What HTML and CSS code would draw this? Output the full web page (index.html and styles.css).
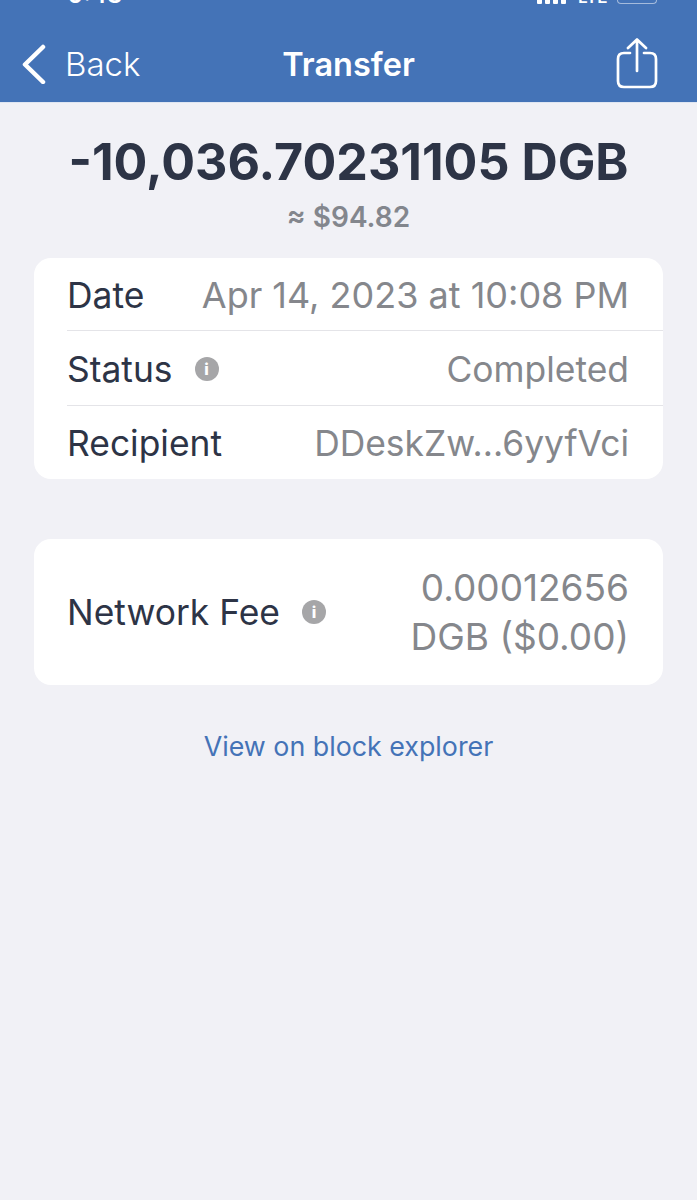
FILE: index.html
```html
<!DOCTYPE html>
<html>
<head>
    <meta charset="utf-8">
    <title>Transfer</title>
    <link rel="stylesheet" href="styles.css">
</head>
<body>
<div class="header">
    <div class="status-bar">
        <span class="time">9:43</span>
        <div class="status-icons">
            <svg class="signal" width="30" height="4" viewBox="0 0 30 4"><rect x="0" y="-2" width="5" height="6" rx="1"/><rect x="8" y="-2" width="5" height="6" rx="1"/><rect x="16" y="-2" width="5" height="6" rx="1"/><rect x="24" y="-2" width="5" height="6" rx="1"/></svg>
            <span class="network">LTE</span>
            <div class="battery"></div>
        </div>
    </div>
    <div class="nav">
        <div class="back">
            <svg width="26" height="40" viewBox="0 0 26 40"><path d="M23 3 L5 20.5 L23 38" fill="none" stroke="#fff" stroke-width="4.5" stroke-linecap="round" stroke-linejoin="round"/></svg>
            <span>Back</span>
        </div>
        <div class="title">Transfer</div>
        <svg class="share" width="42" height="52" viewBox="0 0 42 52"><path d="M14 15 H8 Q2 15 2 21 V43 Q2 49 8 49 H34 Q40 49 40 43 V21 Q40 15 34 15 H28" fill="none" stroke="#fff" stroke-width="2.7" stroke-linecap="round"/><path d="M21 33 V2 M12 10 L21 1.5 L30 10" fill="none" stroke="#fff" stroke-width="2.7" stroke-linecap="round" stroke-linejoin="round"/></svg>
    </div>
</div>

<div class="amount">
    <div class="amount-main">-10,036.70231105 DGB</div>
    <div class="amount-usd">≈ $94.82</div>
</div>

<div class="card">
    <div class="row">
        <div class="label">Date</div>
        <div class="value date-value">Apr 14, 2023 at 10:08 PM</div>
    </div>
    <div class="row">
        <div class="label">Status <span class="info">i</span></div>
        <div class="value">Completed</div>
    </div>
    <div class="row">
        <div class="label">Recipient</div>
        <div class="value">DDeskZw...6yyfVci</div>
    </div>
</div>

<div class="card fee-card">
    <div class="label">Network Fee <span class="info">i</span></div>
    <div class="value fee-value">0.00012656<br>DGB ($0.00)</div>
</div>

<div class="explorer">View on block explorer</div>
</body>
</html>
```

FILE: styles.css
```css
body {
    margin: 0;
    height: 1200px;
    overflow: hidden;
    background-color: #f1f1f6;
    font-family: Inter, "Liberation Sans", sans-serif;
    color: #2d3446;
}

.header {
    height: 102px;
    background-color: #4473b7;
    border-bottom: 1px solid #dfe6f2;
    color: #fff;
}

.status-bar {
    height: 26px;
    position: relative;
    overflow: hidden;
}

.time {
    position: absolute;
    left: 68px;
    top: -19px;
    font-size: 24px;
    line-height: 28px;
    font-weight: 600;
}

.network {
    position: absolute;
    left: 41px;
    top: -15px;
    font-size: 17px;
    line-height: 24px;
    font-weight: 600;
}

.status-icons {
    position: absolute;
    left: 537px;
    top: 0;
    display: flex;
}

.signal {
    fill: #fff;
}

.battery {
    width: 38px;
    height: 3px;
    margin-left: 50px;
    border: 1px solid #a5bbdc;
    border-top: none;
    border-radius: 0 0 4px 4px;
}

.nav {
    display: flex;
    align-items: center;
    justify-content: space-between;
    height: 76px;
    padding: 0 39px 0 20px;
    position: relative;
}

.back {
    display: flex;
    align-items: center;
    gap: 19px;
    font-size: 33px;
    font-weight: 300;
}

.title {
    position: absolute;
    left: 0;
    right: 0;
    text-align: center;
    font-size: 32.5px;
    font-weight: 600;
}

.amount {
    text-align: center;
    padding-top: 32px;
}

.amount-main {
    font-size: 50.2px;
    font-weight: 700;
    line-height: 54px;
}

.amount-usd {
    font-size: 28px;
    font-weight: 600;
    line-height: 32px;
    margin-top: 12px;
    margin-bottom: 25px;
    color: #83868d;
}

.card {
    margin: 0 34px;
    padding-left: 33px;
    background-color: #fff;
    border-radius: 17px;
}

.row {
    display: flex;
    align-items: center;
    justify-content: space-between;
    height: 74px;
    padding: 2px 34px 0 0;
    border-bottom: 1px solid #e4e4e8;
    box-sizing: border-box;
}

.row:first-child {
    height: 73px;
}

.row:nth-child(2) {
    height: 75px;
}

.row:last-child {
    height: 73px;
    border-bottom: none;
}

.label {
    font-size: 35.4px;
    font-weight: 400;
    display: flex;
    align-items: center;
    gap: 22px;
}

.value {
    font-size: 35.4px;
    color: #85878c;
    text-align: right;
}

.date-value {
    font-size: 36px;
}

.info {
    display: inline-block;
    width: 24px;
    height: 24px;
    line-height: 24px;
    border-radius: 50%;
    background-color: #a6a6a8;
    color: #fff;
    font-size: 16px;
    font-weight: 800;
    text-align: center;
}

.fee-card {
    margin-top: 60px;
    padding-right: 34px;
    height: 146px;
    display: flex;
    align-items: center;
    justify-content: space-between;
}

.fee-value {
    font-size: 37px;
    line-height: 49px;
}

.explorer {
    margin-top: 45px;
    text-align: center;
    font-size: 26.8px;
    color: #4473b7;
}
```
